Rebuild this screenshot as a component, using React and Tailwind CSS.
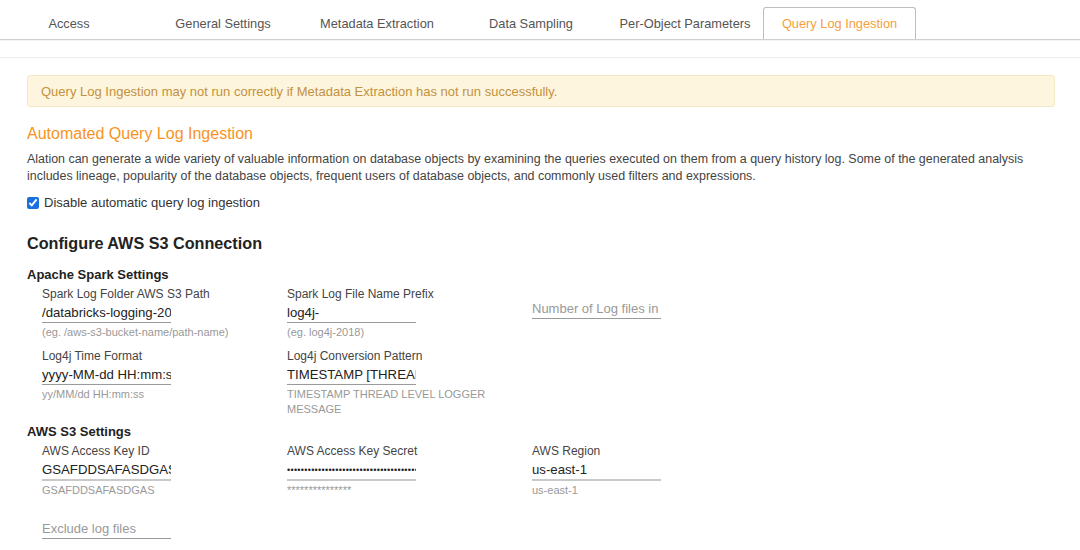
import React from 'react';

const tabs = [
  { label: 'Access', cls: 'w-[138px]' },
  { label: 'General Settings', cls: 'ml-[8px] w-[154px]' },
  { label: 'Metadata Extraction', cls: 'w-[154px]' },
  { label: 'Data Sampling', cls: 'w-[154px]' },
  { label: 'Per-Object Parameters', cls: 'w-[154px]' },
];

const Field = ({ label, value, hint, hint2, thick, small }) => (
  <div className="w-[245px] shrink-0">
    <div className="text-[12px] leading-[16px] text-[#444]">{label}</div>
    <div
      className={`mt-[2px] w-[129px] overflow-hidden whitespace-nowrap text-[#222] ${
        thick ? 'border-b-2 border-[#c9c9c9]' : 'border-b border-[#9a9a9a]'
      } ${small ? 'text-[9px] leading-[18px] tracking-[0.3px]' : 'text-[13.2px] leading-[18px]'}`}
    >
      {value}
    </div>
    <div className="mt-[2px] text-[11px] leading-[15px] text-[#999]">
      {hint}
      {hint2 && <div>{hint2}</div>}
    </div>
  </div>
);

const App = () => {
  return (
    <div className="w-[1080px] h-[550px] overflow-hidden bg-white font-['Liberation_Sans',Arial,sans-serif]">
      {/* tabs */}
      <div className="flex h-[40px] items-end border-b border-[#cfcfcf] shadow-[0_1px_1px_rgba(0,0,0,0.04)]">
        {tabs.map(t => (
          <div key={t.label} className={`${t.cls} flex h-[31px] items-center justify-center text-[12.8px] text-[#555]`}>
            {t.label}
          </div>
        ))}
        <div className="ml-[1px] flex h-[32px] w-[153px] items-center justify-center rounded-t-[3px] border border-b-0 border-[#bdbdbd] pt-px text-[12.8px] text-[#f5a03c]">
          Query Log Ingestion
        </div>
      </div>
      <div className="mt-[17px] border-t border-[#ececec]" />

      <div className="pl-[27px] pr-[25px]">
        <div className="mt-[17px] flex h-[32px] items-center rounded-[3px] border border-[#f5e8c4] bg-[#fdf5de] pl-[13px] pt-px text-[13px] text-[#c4913f]">
          Query Log Ingestion may not run correctly if Metadata Extraction has not run successfully.
        </div>

        <div className="mt-[17px] text-[16px] leading-[20px] text-[#f7931e]">Automated Query Log Ingestion</div>
        <p className="mt-[7px] text-[12.45px] leading-[17px] text-[#444]">
          Alation can generate a wide variety of valuable information on database objects by examining the queries executed on them from a query history log. Some of the generated analysis includes lineage, popularity of the database objects, frequent users of database objects, and commonly used filters and expressions.
        </p>
        <label className="mt-[9px] flex items-center text-[13px] leading-[17px] text-[#333]">
          <input type="checkbox" defaultChecked className="m-0 h-[12px] w-[12px] accent-[#1a6fe0]" />
          <span className="ml-[5px]">Disable automatic query log ingestion</span>
        </label>

        <div className="mt-[21px] text-[16.2px] font-bold leading-[22px] text-[#222]">Configure AWS S3 Connection</div>

        <div className="mt-[12px] text-[13px] font-bold leading-[17px] text-[#222]">Apache Spark Settings</div>
        <div className="pl-[15px]">
          <div className="mt-[3px] flex">
            <Field label="Spark Log Folder AWS S3 Path" value="/databricks-logging-2018" hint="(eg. /aws-s3-bucket-name/path-name)" />
            <Field label="Spark Log File Name Prefix" value="log4j-" hint="(eg. log4j-2018)" />
            <div className="w-[245px] pt-[14px]">
              <div className="w-[129px] overflow-hidden whitespace-nowrap border-b border-[#9a9a9a] text-[13px] leading-[18px] text-[#999]">
                Number of Log files in S3
              </div>
            </div>
          </div>
          <div className="mt-[8px] flex">
            <Field label="Log4j Time Format" value="yyyy-MM-dd HH:mm:ss" hint="yy/MM/dd HH:mm:ss" />
            <Field
              label="Log4j Conversion Pattern"
              value="TIMESTAMP [THREAD] LEVEL LOGGER - MESSAGE"
              hint="TIMESTAMP THREAD LEVEL LOGGER"
              hint2="MESSAGE"
            />
          </div>
        </div>

        <div className="mt-[6px] text-[13px] font-bold leading-[17px] text-[#222]">AWS S3 Settings</div>
        <div className="pl-[15px]">
          <div className="mt-[3px] flex">
            <Field label="AWS Access Key ID" value="GSAFDDSAFASDGAS" hint="GSAFDDSAFASDGAS" thick />
            <Field
              label="AWS Access Key Secret"
              value="••••••••••••••••••••••••••••••••••••••••"
              hint="***************"
              thick
              small
            />
            <Field label="AWS Region" value="us-east-1" hint="us-east-1" thick />
          </div>
          <div className="mt-[22px] w-[129px] border-b border-[#9a9a9a] text-[13px] leading-[18px] text-[#999]">
            Exclude log files
          </div>
        </div>
      </div>
    </div>
  );
};

export default App;
